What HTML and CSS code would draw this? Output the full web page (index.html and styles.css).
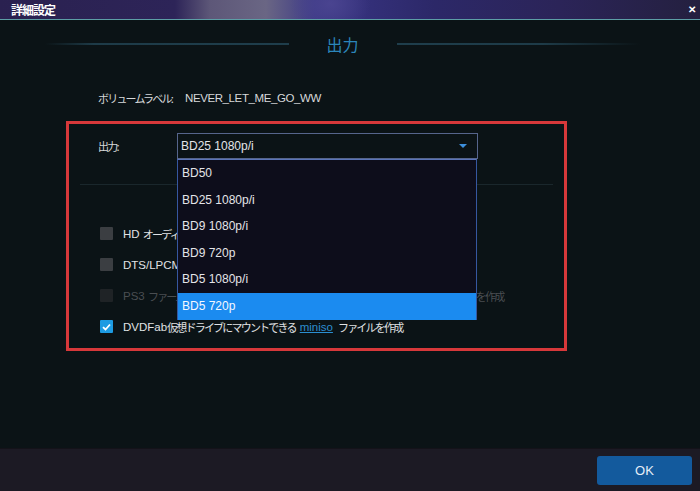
FILE: index.html
```html
<!DOCTYPE html>
<html lang="ja">
<head>
  <meta charset="UTF-8">
  <title>詳細設定</title>
  <link rel="stylesheet" href="styles.css">
</head>
<body>

  <div class="titlebar">
    <span class="titulo">詳細設定</span>
    <span class="cerrar">✕</span>
  </div>

  <div class="contenido">
    <div class="encabezado">
      <span class="linea"></span>
      <span class="encabezado-texto">出力</span>
      <span class="linea linea-der"></span>
    </div>

    <div class="fila-volumen">
      <span class="etiqueta jp">ボリュームラベル:</span>
      <span class="valor">NEVER_LET_ME_GO_WW</span>
    </div>

    <div class="marco">
      <div class="fila-salida">
        <span class="etiqueta-salida jp">出力:</span>
        <div class="selector">
          <span>BD25 1080p/i</span>
          <span class="flecha"></span>
          <ul class="lista">
            <li>BD50</li>
            <li>BD25 1080p/i</li>
            <li>BD9 1080p/i</li>
            <li>BD9 720p</li>
            <li>BD5 1080p/i</li>
            <li class="activo">BD5 720p</li>
          </ul>
        </div>
      </div>

      <div class="separador"></div>

      <div class="opciones">
        <label class="opcion"><span class="caja"></span>HD <span class="jp">オーディオをAC3に変換する</span></label>
        <label class="opcion"><span class="caja"></span>DTS/LPCM <span class="jp">オーディオをAC3に変換する</span></label>
        <label class="opcion deshabilitado"><span class="caja"></span>PS3 <span class="jp">ファームウェア</span>&nbsp;3.55&nbsp;<span class="jp">以降では</span>&nbsp;BD-R&nbsp;<span class="jp">に書き込んで再生可能な</span>&nbsp;ISO&nbsp;<span class="jp">ファイルを作成</span></label>
        <label class="opcion"><span class="caja marcada"><svg width="9" height="8" viewBox="0 0 9 8"><path d="M1 4.2 L3.5 6.5 L8 1.5" fill="none" stroke="#fff" stroke-width="1.8"/></svg></span>DVDFab<span class="jp">仮想ドライブにマウントできる</span><a href="#" class="enlace">miniso</a><span class="jp">ファイルを作成</span></label>
      </div>
    </div>
  </div>

  <div class="pie">
    <button class="btn-ok">OK</button>
  </div>

</body>
</html>
```

FILE: styles.css
```css
body {
  margin: 0;
  width: 700px;
  height: 491px;
  display: flex;
  flex-direction: column;
  background-color: #0b1316;
  color: #d6d8da;
  font-family: 'Liberation Sans', 'Noto Sans CJK JP', sans-serif;
  font-size: 11.5px;
  overflow: hidden;
}

.jp {
  font-family: 'Noto Sans CJK JP', sans-serif;
  font-size: 11px;
  letter-spacing: -1.8px;
}

.titlebar {
  height: 19px;
  flex: none;
  display: flex;
  align-items: center;
  justify-content: space-between;
  padding: 0 4px 0 11px;
  border-bottom: 1px solid #5d9ea6;
  background:
    radial-gradient(ellipse 40px 30px at 330px 4px, #4a4490 0%, rgba(74,68,144,0) 100%),
    linear-gradient(90deg, #2a2150 0%, #2d2458 25%, #5d5778 30%, #6a6684 38%, #3d3a86 45%, #34307a 52%, #2c2868 62%, #2b2458 80%, #24203f 100%);
}

.titulo {
  color: #fff;
  font-weight: bold;
  font-size: 12px;
  font-family: 'Noto Sans CJK JP', sans-serif;
  letter-spacing: -1px;
}

.cerrar {
  color: #fff;
  font-weight: bold;
  font-size: 10px;
}

.contenido {
  flex: 1;
}

.encabezado {
  display: flex;
  align-items: center;
  margin: 14px 0 0 45px;
  width: 595px;
  height: 20px;
}

.linea {
  flex: 1;
  height: 2px;
  background: linear-gradient(90deg, rgba(31,60,74,0) 0%, #1e3b48 20%, #1f3e4c 100%);
}

.linea-der {
  background: linear-gradient(90deg, #1f3e4c 0%, #1e3b48 60%, rgba(31,60,74,0) 100%);
}

.encabezado-texto {
  width: 108px;
  text-align: center;
  color: #2b86bb;
  font-size: 16px;
  font-family: 'Noto Sans CJK JP', sans-serif;
}

.fila-volumen {
  margin: 36px 0 0 98px;
  display: flex;
  height: 16px;
  align-items: center;
}

.etiqueta {
  width: 87px;
  flex: none;
  white-space: nowrap;
}

.valor {
  letter-spacing: -0.4px;
}

.marco {
  margin: 15px 0 0 66px;
  width: 495px;
  height: 215px;
  border: 3px solid #d7383a;
  padding: 9px 0 0;
}

.fila-salida {
  display: flex;
  align-items: center;
  height: 26px;
  padding-left: 29px;
}

.etiqueta-salida {
  width: 79px;
  flex: none;
}

.selector {
  position: relative;
  width: 296px;
  height: 24px;
  border: 1px solid #56658c;
  display: flex;
  align-items: center;
  justify-content: space-between;
  padding-left: 3px;
  font-size: 12px;
  color: #e2e4e8;
  z-index: 2;
}

.flecha {
  width: 0;
  height: 0;
  margin-right: 10px;
  border-left: 4px solid transparent;
  border-right: 4px solid transparent;
  border-top: 4px solid #3d8fdc;
}

.lista {
  position: absolute;
  top: 25px;
  left: -1px;
  width: 298px;
  margin: 0;
  padding: 0;
  list-style: none;
  background-color: #0d0d1b;
  border: 1px solid #3657a0;
  border-bottom: none;
  border-top-color: #5a74b8;
}

.lista li {
  height: 26.6px;
  line-height: 26.6px;
  padding-left: 4px;
  color: #e4e4e8;
}

.lista li.activo {
  background-color: #1b8bf0;
  color: #f4f8ff;
}

.separador {
  margin: 25px 11px 0 11px;
  height: 1px;
  background-color: #1a272c;
}

.opciones {
  margin-top: 33px;
  padding-left: 31px;
}

.opcion {
  display: flex;
  align-items: center;
  height: 31px;
  color: #e0e2e4;
  white-space: pre;
}

.caja {
  width: 13px;
  height: 13px;
  margin-right: 10px;
  background-color: #3b3e42;
  border-radius: 1px;
  display: flex;
  align-items: center;
  justify-content: center;
}

.deshabilitado {
  color: #4a4e52;
}

.deshabilitado .caja {
  background-color: #1f2326;
}

.caja.marcada {
  background-color: #1d9be2;
}

.enlace {
  color: #2b8ed0;
  margin: 0 5px 0 4px;
}

.pie {
  height: 42px;
  flex: none;
  background-color: #1c1a24;
  border-top: 1px solid #141219;
  display: flex;
  justify-content: flex-end;
  align-items: center;
  padding-right: 8px;
}

.btn-ok {
  width: 95px;
  height: 29px;
  background-color: #135a9d;
  color: #e6eef8;
  border: none;
  border-radius: 3px;
  font-family: 'Liberation Sans', sans-serif;
  font-size: 13px;
}
```
